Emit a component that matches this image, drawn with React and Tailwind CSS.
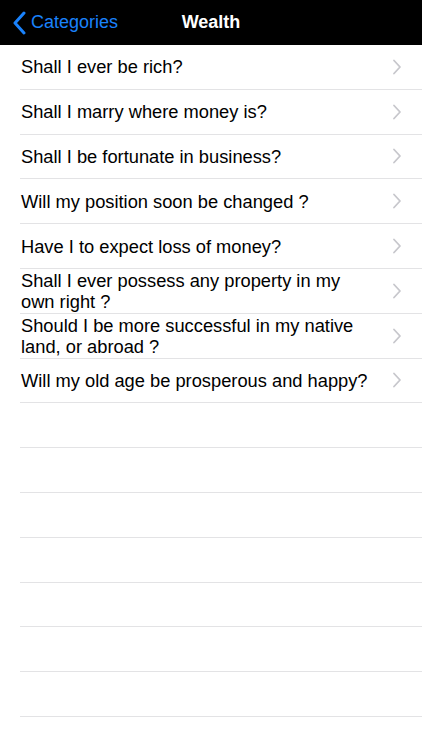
const questions = [
  "Shall I ever be rich?",
  "Shall I marry where money is?",
  "Shall I be fortunate in business?",
  "Will my position soon be changed ?",
  "Have I to expect loss of money?",
  "Shall I ever possess any property in my own right ?",
  "Should I be more successful in my native land, or abroad ?",
  "Will my old age be prosperous and happy?",
];

function Disclosure() {
  return (
    <svg width="10" height="16" viewBox="0 0 10 16" fill="none" className="shrink-0">
      <path d="M2 1.5 L8 8 L2 14.5" stroke="#c7c7cc" strokeWidth="1.8" strokeLinecap="round" strokeLinejoin="round" />
    </svg>
  );
}

export default function App() {
  const emptyRows = Array.from({ length: 8 });

  return (
    <div className="w-[422px] h-[750px] overflow-hidden bg-white font-['Liberation_Sans',Arial,sans-serif]">
      {/* Nav bar */}
      <header className="relative h-[45px] bg-black flex items-center">
        <button className="flex items-center pl-[12px] text-[#1a82fb]">
          <svg width="15" height="24" viewBox="0 0 15 24" fill="none">
            <path d="M12 2 L3 12 L12 22" stroke="currentColor" strokeWidth="3" strokeLinecap="round" strokeLinejoin="round" />
          </svg>
          <span className="ml-[4px] text-[18px]">Categories</span>
        </button>
        <h1 className="absolute left-0 right-0 text-center text-white text-[18px] font-bold pointer-events-none">
          Wealth
        </h1>
      </header>

      {/* List */}
      <ul>
        {questions.map((q) => (
          <li key={q} className="h-[44.8px] ml-[20px] border-b border-[#e3e3e5] flex items-center pr-[20px]">
            <span className="flex-1 pl-[1px] pr-[24px] text-[18.3px] leading-[21px] text-black">{q}</span>
            <Disclosure />
          </li>
        ))}
        {emptyRows.map((_, i) => (
          <li key={i} className="h-[44.8px] ml-[20px] border-b border-[#e3e3e5]" />
        ))}
      </ul>
    </div>
  );
}
